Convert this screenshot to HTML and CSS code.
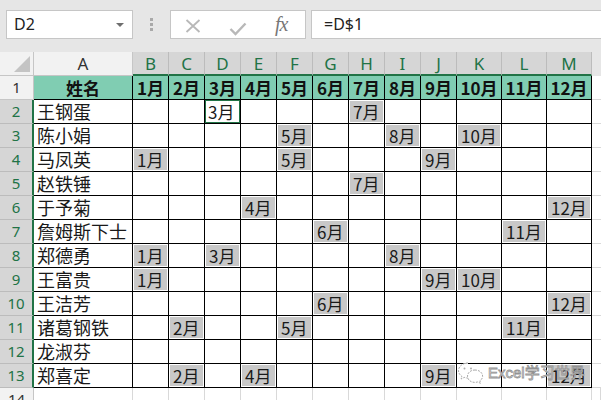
FILE: index.html
```html
<!DOCTYPE html>
<html lang="zh-CN">
<head>
<meta charset="utf-8">
<title>Excel</title>
<link rel="stylesheet" href="styles.css">
</head>
<body>
<div class="bar">
  <div class="namebox"><span class="nb-text">D2</span><span class="nb-arrow"></span></div>
  <div class="dots"><i></i><i></i><i></i></div>
  <div class="icons">
    <svg class="ic-x" width="16" height="14" viewBox="0 0 16 14"><path d="M1.5 1 L14.5 13 M14.5 1 L1.5 13" stroke="#b8b8b8" stroke-width="1.8" fill="none"/></svg>
    <svg class="ic-ok" width="18" height="14" viewBox="0 0 18 14"><path d="M1.5 7 L6.5 12 L16.5 1.5" stroke="#b8b8b8" stroke-width="2.4" fill="none"/></svg>
    <span class="fx">fx</span>
  </div>
  <div class="formula">=D$1</div>
</div>

<div class="sheet">
  <div class="corner"><svg width="16" height="16" viewBox="0 0 16 16"><path d="M16 0 L16 16 L0 16 Z" fill="#c4c4c4"/></svg></div>
  <div class="ch">A</div>
  <div class="ch sel">B</div><div class="ch sel">C</div><div class="ch sel">D</div><div class="ch sel">E</div><div class="ch sel">F</div><div class="ch sel">G</div><div class="ch sel">H</div><div class="ch sel">I</div><div class="ch sel">J</div><div class="ch sel">K</div><div class="ch sel">L</div><div class="ch sel">M</div>
  <div class="chf"></div>

  <div class="rh">1</div>
  <div class="c hd">姓名</div>
  <div class="c hd">1月</div><div class="c hd">2月</div><div class="c hd">3月</div><div class="c hd">4月</div><div class="c hd">5月</div><div class="c hd">6月</div><div class="c hd">7月</div><div class="c hd">8月</div><div class="c hd">9月</div><div class="c hd">10月</div><div class="c hd">11月</div><div class="c hd">12月</div>
  <div class="f"></div>

  <div class="rh sel">2</div>
  <div class="c n">王钢蛋</div>
  <div class="c"></div><div class="c"></div><div class="c"><span class="act">3月</span></div><div class="c"></div><div class="c"></div><div class="c"></div><div class="c"><span class="v">7月</span></div><div class="c"></div><div class="c"></div><div class="c"></div><div class="c"></div><div class="c"></div>
  <div class="f"></div>

  <div class="rh sel">3</div>
  <div class="c n">陈小娟</div>
  <div class="c"></div><div class="c"></div><div class="c"></div><div class="c"></div><div class="c"><span class="v">5月</span></div><div class="c"></div><div class="c"></div><div class="c"><span class="v">8月</span></div><div class="c"></div><div class="c"><span class="v">10月</span></div><div class="c"></div><div class="c"></div>
  <div class="f"></div>

  <div class="rh sel">4</div>
  <div class="c n">马凤英</div>
  <div class="c"><span class="v">1月</span></div><div class="c"></div><div class="c"></div><div class="c"></div><div class="c"><span class="v">5月</span></div><div class="c"></div><div class="c"></div><div class="c"></div><div class="c"><span class="v">9月</span></div><div class="c"></div><div class="c"></div><div class="c"></div>
  <div class="f"></div>

  <div class="rh sel">5</div>
  <div class="c n">赵铁锤</div>
  <div class="c"></div><div class="c"></div><div class="c"></div><div class="c"></div><div class="c"></div><div class="c"></div><div class="c"><span class="v">7月</span></div><div class="c"></div><div class="c"></div><div class="c"></div><div class="c"></div><div class="c"></div>
  <div class="f"></div>

  <div class="rh sel">6</div>
  <div class="c n">于予菊</div>
  <div class="c"></div><div class="c"></div><div class="c"></div><div class="c"><span class="v">4月</span></div><div class="c"></div><div class="c"></div><div class="c"></div><div class="c"></div><div class="c"></div><div class="c"></div><div class="c"></div><div class="c"><span class="v">12月</span></div>
  <div class="f"></div>

  <div class="rh sel">7</div>
  <div class="c n">詹姆斯下士</div>
  <div class="c"></div><div class="c"></div><div class="c"></div><div class="c"></div><div class="c"></div><div class="c"><span class="v">6月</span></div><div class="c"></div><div class="c"></div><div class="c"></div><div class="c"></div><div class="c"><span class="v">11月</span></div><div class="c"></div>
  <div class="f"></div>

  <div class="rh sel">8</div>
  <div class="c n">郑德勇</div>
  <div class="c"><span class="v">1月</span></div><div class="c"></div><div class="c"><span class="v">3月</span></div><div class="c"></div><div class="c"></div><div class="c"></div><div class="c"></div><div class="c"><span class="v">8月</span></div><div class="c"></div><div class="c"></div><div class="c"></div><div class="c"></div>
  <div class="f"></div>

  <div class="rh sel">9</div>
  <div class="c n">王富贵</div>
  <div class="c"><span class="v">1月</span></div><div class="c"></div><div class="c"></div><div class="c"></div><div class="c"></div><div class="c"></div><div class="c"></div><div class="c"></div><div class="c"><span class="v">9月</span></div><div class="c"><span class="v">10月</span></div><div class="c"></div><div class="c"></div>
  <div class="f"></div>

  <div class="rh sel">10</div>
  <div class="c n">王洁芳</div>
  <div class="c"></div><div class="c"></div><div class="c"></div><div class="c"></div><div class="c"></div><div class="c"><span class="v">6月</span></div><div class="c"></div><div class="c"></div><div class="c"></div><div class="c"></div><div class="c"></div><div class="c"><span class="v">12月</span></div>
  <div class="f"></div>

  <div class="rh sel">11</div>
  <div class="c n">诸葛钢铁</div>
  <div class="c"></div><div class="c"><span class="v">2月</span></div><div class="c"></div><div class="c"></div><div class="c"><span class="v">5月</span></div><div class="c"></div><div class="c"></div><div class="c"></div><div class="c"></div><div class="c"></div><div class="c"><span class="v">11月</span></div><div class="c"></div>
  <div class="f"></div>

  <div class="rh sel">12</div>
  <div class="c n">龙淑芬</div>
  <div class="c"></div><div class="c"></div><div class="c"></div><div class="c"></div><div class="c"></div><div class="c"></div><div class="c"></div><div class="c"></div><div class="c"></div><div class="c"></div><div class="c"></div><div class="c"></div>
  <div class="f"></div>

  <div class="rh sel">13</div>
  <div class="c n">郑喜定</div>
  <div class="c"></div><div class="c"><span class="v">2月</span></div><div class="c"></div><div class="c"><span class="v">4月</span></div><div class="c"></div><div class="c"></div><div class="c"></div><div class="c"></div><div class="c"><span class="v">9月</span></div><div class="c"></div><div class="c"></div><div class="c"><span class="v">12月</span></div>
  <div class="f"></div>

  <div class="rh last">14</div>
  <div class="e"></div>
  <div class="e"></div><div class="e"></div><div class="e"></div><div class="e"></div><div class="e"></div><div class="e"></div><div class="e"></div><div class="e"></div><div class="e"></div><div class="e"></div><div class="e"></div><div class="e"></div>
  <div class="e"></div>
</div>

<div class="wm">
  <svg class="wm-ic" width="28" height="24" viewBox="0 0 28 24">
    <path d="M11 2 C5.5 2 1.5 5.5 1.5 9.6 C1.5 12 2.8 14 4.8 15.3 L4 18 L7.2 16.4 C8.4 16.8 9.7 17 11 17" fill="#fff" stroke="#a8a8a8" stroke-width="1" stroke-dasharray="2 1.2"/>
    <path d="M18 9 C13.5 9 10.5 11.8 10.5 15.2 C10.5 18.6 13.5 21.4 18 21.4 C19 21.4 20 21.2 20.8 20.9 L23.6 22.4 L22.9 19.8 C24.7 18.6 25.6 17 25.6 15.2 C25.6 11.8 22.5 9 18 9 Z" fill="#fff" stroke="#a8a8a8" stroke-width="1" stroke-dasharray="2 1.2"/>
    <circle cx="7.5" cy="7.5" r="1" fill="#b0b0b0"/>
    <circle cx="14" cy="7.5" r="1" fill="#b0b0b0"/>
  </svg>
  <span class="wm-t">Excel学习世界</span>
</div>
</body>
</html>
```

FILE: styles.css
```css
* { box-sizing: border-box; margin: 0; padding: 0; }

html, body { background: #ffffff; }

body {
  width: 601px;
  height: 400px;
  overflow: hidden;
  position: relative;
  font-family: "Noto Sans CJK SC", "Noto Sans", sans-serif;
  color: #1a1a1a;
}

/* ---------- formula bar ---------- */
.bar {
  height: 52px;
  background: #e6e6e6;
  display: flex;
  align-items: flex-start;
  padding-top: 10px;
}

.namebox {
  margin-left: 6px;
  width: 127px;
  height: 29px;
  background: #fff;
  border: 1px solid #c6c6c6;
  display: flex;
  align-items: center;
  justify-content: space-between;
  padding: 0 8px 0 7px;
}

.nb-text {
  font-family: "Noto Sans", sans-serif;
  font-size: 16px;
  color: #222;
  line-height: 27px;
}

.nb-arrow {
  width: 0;
  height: 0;
  border-left: 4px solid transparent;
  border-right: 4px solid transparent;
  border-top: 4px solid #6e6e6e;
  margin-top: 1px;
}

.dots {
  margin-left: 17px;
  margin-top: 8px;
  display: flex;
  flex-direction: column;
  gap: 2px;
}

.dots i {
  display: block;
  width: 3px;
  height: 3px;
  background: #a9a9a9;
}

.icons {
  margin-left: 17px;
  width: 136px;
  height: 29px;
  background: #fff;
  border: 1px solid #c6c6c6;
  display: flex;
  align-items: center;
  padding-left: 14px;
}

.ic-x { margin-top: 3px; }
.ic-ok { margin-left: 28px; margin-top: 8px; }

.fx {
  margin-left: 28px;
  font-family: "Liberation Serif", serif;
  font-style: italic;
  font-size: 20px;
  color: #777;
  line-height: 27px;
  letter-spacing: -1px;
}

.formula {
  margin-left: 5px;
  flex: 1;
  height: 29px;
  background: #fff;
  border: 1px solid #c6c6c6;
  border-right: none;
  padding-left: 12px;
  font-family: "Noto Sans", sans-serif;
  font-size: 16px;
  line-height: 27px;
  color: #222;
}

/* ---------- sheet ---------- */
.sheet {
  display: grid;
  grid-template-columns: 34px 99px repeat(9, 36px) repeat(3, 45px) 1fr;
  grid-template-rows: repeat(14, 24px) 1fr;
  height: 348px;
}

.corner {
  background: #f2f2f2;
  border-right: 1px solid #c6c6c6;
  border-bottom: 1px solid #c6c6c6;
  display: flex;
  align-items: flex-end;
  justify-content: flex-end;
  padding: 0 3px 3px 0;
}

.ch {
  background: #f2f2f2;
  border-right: 1px solid #c6c6c6;
  border-bottom: 1px solid #c6c6c6;
  font-family: "Noto Sans", sans-serif;
  font-size: 17px;
  color: #333;
  text-align: center;
  line-height: 23px;
}

.ch.sel {
  background: #d6d6d6;
  color: #217346;
  border-bottom: 2px solid #217346;
  border-right-color: #bcbcbc;
}

.chf { background: #e6e6e6; }

.rh {
  background: #f2f2f2;
  border-right: 1px solid #c6c6c6;
  border-bottom: 1px solid #c6c6c6;
  font-family: "Noto Sans", sans-serif;
  font-size: 15px;
  color: #333;
  text-align: center;
  line-height: 23px;
}

.rh.sel {
  background: #d6d6d6;
  color: #217346;
  border-right: 2px solid #217346;
  border-bottom-color: #bcbcbc;
}

.rh.last { border-bottom: none; }

.c {
  border-right: 1px solid #000;
  border-bottom: 1px solid #000;
  font-size: 17px;
  line-height: 23px;
  white-space: nowrap;
}

.c.hd {
  background: #80cdb2;
  font-weight: bold;
  text-align: center;
  color: #111;
}

.c.n { padding-left: 3px; font-size: 18px; }

.v {
  display: block;
  margin: 1px;
  height: 21px;
  line-height: 21px;
  background: #c8c8c8;
  padding-left: 3px;
  color: #1a1a1a;
}

.act {
  display: block;
  height: 23px;
  line-height: 21px;
  border: 1px solid #217346;
  padding-left: 2px;
}

.f { border-bottom: 1px solid #d9d9d9; }

.e { border-right: 1px solid #d9d9d9; }

/* ---------- watermark overlay ---------- */
.wm {
  position: absolute;
  left: 457px;
  top: 361px;
  display: flex;
  align-items: center;
  gap: 3px;
}

.wm-t {
  font-family: "Liberation Sans", "Noto Sans CJK SC", sans-serif;
  font-size: 15px;
  color: rgba(255, 255, 255, 0.92);
  -webkit-text-stroke: 0.8px #929292;
  line-height: 24px;
}
```
